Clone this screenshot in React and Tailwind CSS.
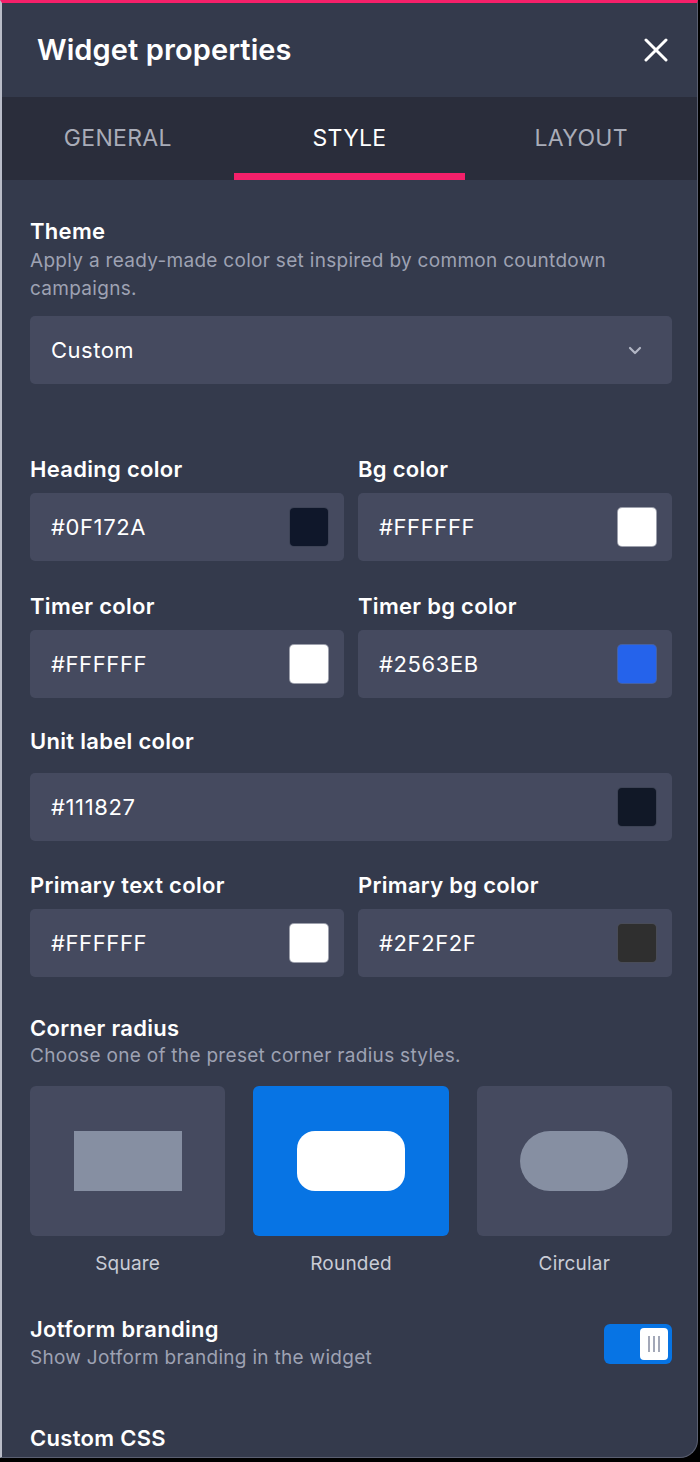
import React from "react";

const font = { fontFamily: "Inter, 'Noto Sans', sans-serif" };

function Swatch({ color }) {
  return (
    <div
      className="w-10 h-10 rounded-[5px] border border-[#5b6074]/60"
      style={{ backgroundColor: color }}
    />
  );
}

function ColorField({ label, value, color, labelGap = "mb-3" }) {
  return (
    <div className="flex flex-col min-w-0">
      <label className={`text-[22px] leading-6 font-semibold tracking-[0.3px] text-white ${labelGap}`}>
        {label}
      </label>
      <div className="h-[68px] bg-[#454a5f] rounded-[5px] flex items-center justify-between pl-[21px] pr-[15px]">
        <span className="text-[22px] tracking-[0.6px] text-white">{value}</span>
        <Swatch color={color} />
      </div>
    </div>
  );
}

function RadiusTile({ label, active, shape }) {
  return (
    <div className="flex flex-col items-center">
      <div
        className={`w-full h-[150px] rounded-[6px] flex items-center justify-center ${
          active ? "bg-[#0774e4]" : "bg-[#454a5f]"
        }`}
      >
        <div className={`w-[108px] h-[60px] ${shape}`} />
      </div>
      <span className="mt-[14px] text-[19px] leading-7 tracking-[0.2px] text-[#c9ccd6]">{label}</span>
    </div>
  );
}

export default function App() {
  return (
    <div className="bg-black h-[1462px] w-[700px] overflow-hidden" style={font}>
      <div className="h-[1458px] w-[698px] bg-[#343a4c] border-t-[3px] border-t-[#f5206a] border-l-2 border-l-[#b9bcc8] border-r border-r-[#5a5f71] border-b border-b-[#5a5f71] rounded-br-[18px] overflow-hidden flex flex-col">
        <header className="h-[94px] shrink-0 flex items-center justify-between pl-[35px] pr-[29px]">
          <h1 className="text-[29px] font-semibold text-white tracking-[0.1px]">Widget properties</h1>
          <svg width="24" height="24" viewBox="0 0 24 24" fill="none" stroke="white" strokeWidth="3" strokeLinecap="round">
            <path d="M2 2 L22 22 M22 2 L2 22" />
          </svg>
        </header>

        <nav className="h-[83px] shrink-0 bg-[#2a2d3b] grid grid-cols-3">
          {["GENERAL", "STYLE", "LAYOUT"].map((t) => {
            const active = t === "STYLE";
            return (
              <div key={t} className="relative flex items-center justify-center">
                <span className={`text-[23px] tracking-[0.3px] ${active ? "text-white" : "text-[#a9acb8]"}`}>
                  {t}
                </span>
                {active && <div className="absolute left-0 right-0 bottom-0 h-[7px] bg-[#f5206a]" />}
              </div>
            );
          })}
        </nav>

        <div className="pl-[28px] pr-[25px] pt-[39px] flex flex-col">
          <h2 className="text-[22px] leading-6 font-semibold tracking-[0.3px] text-white">Theme</h2>
          <p className="mt-1 text-[19px] leading-7 tracking-[0.3px] text-[#9ea2b3]">
            Apply a ready-made color set inspired by common countdown campaigns.
          </p>
          <div className="mt-[13px] h-[68px] bg-[#454a5f] rounded-[5px] flex items-center justify-between pl-[21px] pr-[30px]">
            <span className="text-[22px] tracking-[0.5px] text-white">Custom</span>
            <svg width="14" height="9" viewBox="0 0 14 9" fill="none" stroke="#b3b7c5" strokeWidth="2.2" strokeLinecap="round" strokeLinejoin="round">
              <path d="M2 2 L7 7 L12 2" />
            </svg>
          </div>

          <div className="mt-[73px] grid grid-cols-2 gap-x-[14px]">
            <ColorField label="Heading color" value="#0F172A" color="#0f172a" />
            <ColorField label="Bg color" value="#FFFFFF" color="#ffffff" />
          </div>
          <div className="mt-[33px] grid grid-cols-2 gap-x-[14px]">
            <ColorField label="Timer color" value="#FFFFFF" color="#ffffff" />
            <ColorField label="Timer bg color" value="#2563EB" color="#2563eb" />
          </div>
          <div className="mt-[31px]">
            <ColorField label="Unit label color" value="#111827" color="#111827" labelGap="mb-5" />
          </div>
          <div className="mt-[32px] grid grid-cols-2 gap-x-[14px]">
            <ColorField label="Primary text color" value="#FFFFFF" color="#ffffff" />
            <ColorField label="Primary bg color" value="#2F2F2F" color="#2f2f2f" />
          </div>

          <h2 className="mt-[39px] text-[22px] leading-6 font-semibold tracking-[0.3px] text-white">Corner radius</h2>
          <p className="mt-[2px] text-[19px] leading-7 tracking-[0.3px] text-[#9ea2b3]">
            Choose one of the preset corner radius styles.
          </p>
          <div className="mt-[16px] grid grid-cols-3 gap-x-[28px]">
            <RadiusTile label="Square" shape="bg-[#868fa2]" />
            <RadiusTile label="Rounded" active shape="bg-white rounded-[18px]" />
            <RadiusTile label="Circular" shape="bg-[#868fa2] rounded-full" />
          </div>

          <div className="mt-[39px] flex items-center justify-between">
            <div className="flex flex-col">
              <h2 className="text-[22px] leading-6 font-semibold tracking-[0.3px] text-white">Jotform branding</h2>
              <p className="mt-[3px] text-[19px] leading-7 tracking-[0.3px] text-[#9ea2b3]">Show Jotform branding in the widget</p>
            </div>
            <div className="w-[68px] h-10 rounded-[6px] bg-[#0774e4] flex items-center justify-end pr-[4px] -mt-[2px]">
              <div className="w-[28px] h-8 rounded-[4px] bg-white flex items-center justify-center gap-[3px]">
                <span className="w-[2px] h-[16px] bg-[#a3a8b8]" />
                <span className="w-[2px] h-[16px] bg-[#a3a8b8]" />
                <span className="w-[2px] h-[16px] bg-[#a3a8b8]" />
              </div>
            </div>
          </div>

          <h2 className="mt-[54px] text-[22px] leading-6 font-semibold tracking-[0.3px] text-white">Custom CSS</h2>
        </div>
      </div>
    </div>
  );
}
